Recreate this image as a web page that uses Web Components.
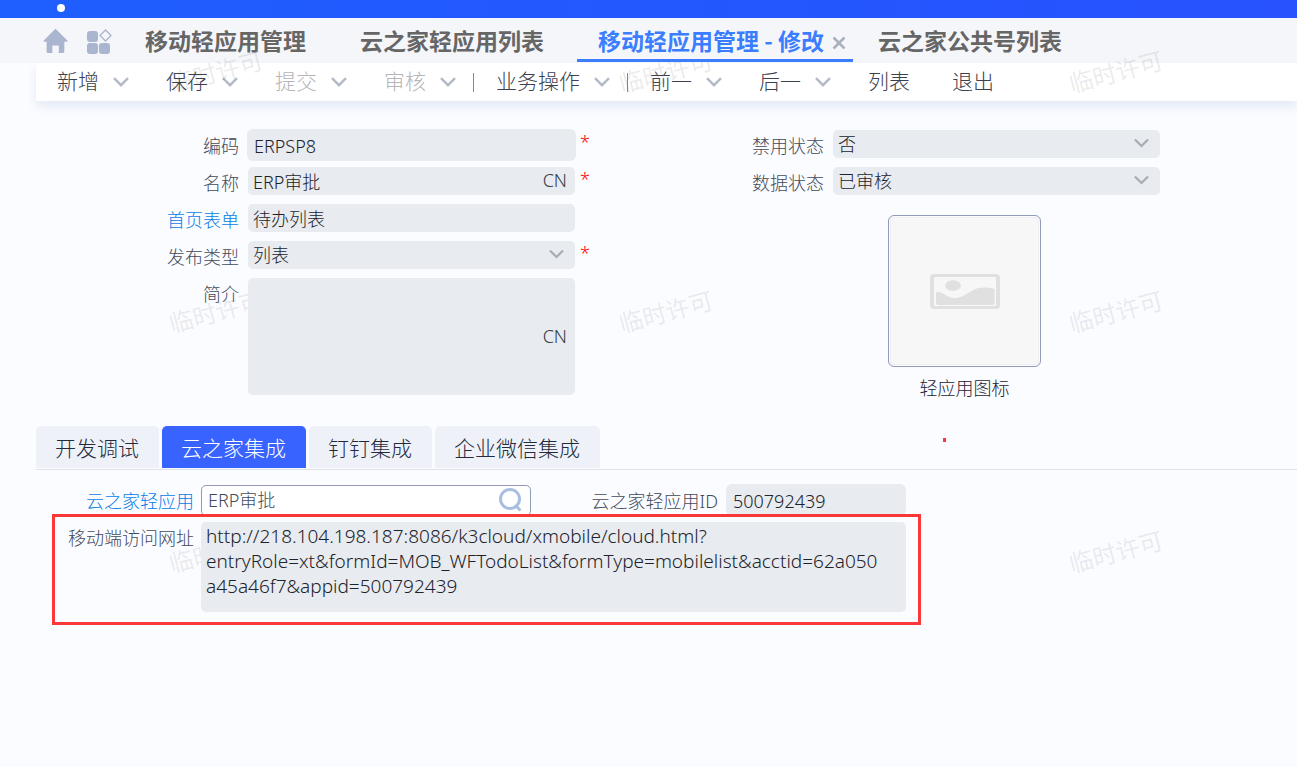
<!DOCTYPE html>
<html lang="zh-CN">
<head>
<meta charset="utf-8">
<title>移动轻应用管理 - 修改</title>
<style>
  body { margin: 0; background: #fbfcff; color: #2b3440; font: 300 18px/24px "Noto Sans", "Noto Sans CJK SC", sans-serif; }
</style>
</head>
<body>
<app-page></app-page>
<script>
const chevron = (w, color) => `<svg width="${w}" height="10" viewBox="0 0 16 10" fill="none" stroke="${color}" stroke-width="2.400" aria-hidden="true"><path d="M1 1.2 8 8.2 15 1.2"/></svg>`;

function define(name, render) {
  customElements.define(name, class extends HTMLElement {
    connectedCallback() {
      if (this.shadowRoot) return;
      this.attachShadow({ mode: 'open' }).innerHTML = render(this);
    }
  });
}

define('page-tab', el => `
<style>
  :host { display: block; height: 44px; }
  :host([active]) { position: relative; z-index: 1; }
  div { display: flex; align-items: center; height: 41px; padding: 0 7px 0 21px; border-bottom: 3px solid transparent; }
  a { color: #666; text-decoration: none; font: 700 23px/44px "Noto Sans CJK SC", sans-serif; white-space: nowrap; padding-top: 2px; }
  button { visibility: hidden; border: 0; background: none; padding: 0; margin: 8px 0 0 8px; width: 14px; height: 14px; }
  svg { display: block; }
  :host([active]) div { border-color: #3a7eff; background: #f5f6fa; }
  :host([active]) a { color: #3a7eff; }
  :host([active]) button { visibility: visible; }
</style>
<div><a href="#"><slot></slot></a><button aria-label="关闭"><svg width="14" height="14" viewBox="0 0 14 14" stroke="#a9b0bf" stroke-width="2.500"><path d="M1.5 1.5 12.5 12.5M12.5 1.5 1.5 12.5"/></svg></button></div>`);

define('app-header', () => `
<style>
  :host { display: block; background: #f5f6fa; }
  .brand { height: 18px; background: linear-gradient(90deg, #1f5eff, #2752fe); overflow: hidden; }
  .dot { width: 8px; height: 8px; margin: 4px 0 0 57px; border-radius: 50%; background: #fff; }
  nav { display: flex; height: 45px; }
  .icons { display: flex; align-items: center; gap: 18px; padding: 0 11px 0 43px; }
  .icons a { display: block; height: 26px; }
  .tabs { display: flex; gap: 4px; }
</style>
<div class="brand"><div class="dot"></div></div>
<nav>
  <div class="icons">
    <a href="#" aria-label="首页"><svg width="26" height="26" viewBox="0 0 26 26" fill="#aab5cf"><path d="M12.5.8 24.4 12.5q.7 1-.5 1.2H21.3V23.4q0 1.6-1.6 1.6H15.8V17.5H9.3V25H5.2q-1.6 0-1.6-1.6V13.7H1.2Q0 13.4.7 12.5Z"/></svg></a>
    <a href="#" aria-label="应用"><svg width="26" height="26" viewBox="0 0 26 26" fill="#aab5cf"><rect y="3" width="11" height="11" rx="3"/><rect y="15" width="11" height="11" rx="3"/><rect x="12" y="15" width="11" height="11" rx="3"/><path d="M18.500 2 24 7.500l-5.500 5.500L13 7.500Z" fill="none" stroke="#aab5cf" stroke-width="1.300"/></svg></a>
  </div>
  <div class="tabs">
    <page-tab>移动轻应用管理</page-tab>
    <page-tab>云之家轻应用列表</page-tab>
    <page-tab active>移动轻应用管理 - 修改</page-tab>
    <page-tab>云之家公共号列表</page-tab>
  </div>
</nav>`);

define('tool-item', el => `
<style>
  :host { display: block; }
  button { display: flex; align-items: center; gap: 14px; height: 38px; border: 0; background: none; padding: 0 21px 2px; color: #3b414d; font: inherit; font-size: 21px; line-height: 36px; white-space: nowrap; }
  svg { margin-top: 2px; }
  button.menu { padding-right: 16px; }
  button:disabled { color: #b5b5b8; }
</style>
<button class="${el.hasAttribute('menu') ? 'menu' : ''}" ${el.hasAttribute('disabled') ? 'disabled' : ''}><slot></slot>${el.hasAttribute('menu') ? chevron(16, '#b4bac8') : ''}</button>`);

define('tool-bar', () => `
<style>
  :host { display: flex; align-items: center; height: 38px; margin-left: 36px; background: #fff; box-shadow: 0 6px 10px #e4eaf5; }
  i { width: 1px; height: 19px; margin: 0 1px; background: #888; }
</style>
<tool-item menu>新增</tool-item><tool-item menu>保存</tool-item><tool-item menu disabled>提交</tool-item><tool-item menu disabled>审核</tool-item><i></i>
<tool-item menu>业务操作</tool-item><i></i>
<tool-item menu>前一</tool-item><tool-item menu>后一</tool-item><tool-item>列表</tool-item><tool-item>退出</tool-item>`);

/* One labelled field; kind: text | select | area | search */
define('form-field', el => {
  const a = n => el.getAttribute(n) || '';
  const kind = a('kind') || 'text';
  const control = kind === 'select' ? `<select id="c" disabled><option>${a('value')}</option></select>`
    : kind === 'area' ? `<textarea id="c" readonly>${a('value')}</textarea>`
    : `<input id="c" value="${a('value')}" ${kind === 'search' ? '' : 'readonly'}>`;
  return `
<style>
  :host { display: flex; align-items: flex-start; color: #434b5a; }
  label { flex: none; width: var(--label-width, 203px); margin-right: var(--label-gap, 9px); padding-top: 4px; text-align: right; white-space: nowrap; }
  label a { color: #0a7de6; text-decoration: none; }
  .box { position: relative; flex: 0 1 var(--field-width, 327px); min-width: 0; }
  input, select, textarea { display: block; box-sizing: border-box; width: 100%; height: 28px; margin: 0; padding: 0 5px; border: 0; border-radius: 5px; outline: 0; resize: none; appearance: none; overflow: hidden; background: #e8ebef; color: #1c232c; opacity: 1; font: inherit; line-height: 25px; }
  textarea { height: var(--area-height, 117px); padding: 2px 20px 2px 5px; overflow-wrap: anywhere; font-size: 19px; }
  :host([large]) input { height: 30px; padding: 2px 6px 0; box-shadow: 0 0 0 1px #e8ebef; }
  :host([kind=search]) input { height: 31px; padding: 0 6px 3px; background: #fff; border: 1px solid #8f9bb9; color: #434b5a; }
  .suffix { position: absolute; right: 8px; top: 0; bottom: 2px; display: flex; align-items: center; color: #343b44; }
  button { border: 0; padding: 0; background: none; display: flex; }
  .select { right: 11px; }
  .star { color: #f00; padding-left: 5px; line-height: 24px; }
</style>
<label for="c">${el.hasAttribute('link') ? `<a href="#">${a('label')}</a>` : a('label')}</label>
<div class="box">${control}
${a('suffix') ? `<span class="suffix">${a('suffix')}</span>` : ''}
${kind === 'select' ? `<span class="suffix select">${chevron(15, '#a9adb3')}</span>` : ''}
${kind === 'search' ? `<button class="suffix" aria-label="搜索"><svg width="26" height="25" viewBox="0 0 26 25" fill="none" stroke="#a9bfdf" stroke-width="3"><circle cx="13" cy="12" r="9.500"/><path d="M18 18 23.500 23.500"/></svg></button>` : ''}
</div>${el.hasAttribute('required') ? '<span class="star">*</span>' : ''}`;
});

define('picture-field', () => `
<style>
  :host { display: flex; flex-direction: column; align-items: center; gap: 9px; width: 153px; color: #1d2230; }
  button { box-sizing: border-box; width: 153px; height: 152px; border: 1px solid #8f9bb9; border-radius: 6px; padding: 0; background: #f7f7f7; box-shadow: inset 0 0 0 1px #fbfcff, inset 0 0 0 2px #eeeff1; display: grid; place-items: center; }
</style>
<button aria-labelledby="t"><svg width="70" height="35" viewBox="0 0 70 35"><rect width="70" height="35" rx="4" fill="#e0e0e0"/><rect x="4" y="3" width="62" height="29" rx="1" fill="#f7f7f7"/><ellipse cx="23" cy="11.500" rx="7.800" ry="5.300" fill="#e0e0e0"/><path d="M6 19q0-1.500 3-1 4 .8 7 3.500 9 5.500 19-.5C43 15.500 50 11 64.500 15V29q0 2-2 2H8q-2 0-2-2Z" fill="#e0e0e0"/></svg></button>
<span id="t">轻应用图标</span>`);

define('basic-form', () => `
<style>
  :host { display: grid; grid-template-columns: 585fr 676fr; padding: 29px 0 0 36px; }
  .col { display: flex; flex-direction: column; gap: 9px; min-width: 0; }
  .col > [large] { height: 28px; }
  picture-field { margin: 11px 0 0 267px; }
</style>
<div class="col">
  <form-field label="编码" value="ERPSP8" large required></form-field>
  <form-field label="名称" value="ERP审批" suffix="CN" required></form-field>
  <form-field label="首页表单" value="待办列表" link></form-field>
  <form-field label="发布类型" value="列表" kind="select" required></form-field>
  <form-field label="简介" kind="area" suffix="CN"></form-field>
</div>
<div class="col">
  <form-field label="禁用状态" value="否" kind="select"></form-field>
  <form-field label="数据状态" value="已审核" kind="select"></form-field>
  <picture-field></picture-field>
</div>`);

define('detail-tabs', () => `
<style>
  :host { display: block; margin: 26px 0 0 36px; border-bottom: 1px solid #dfe2e9; }
  div { display: flex; gap: 3px; padding-bottom: 1px; }
  button { height: 42px; border: 0; border-radius: 5px 5px 0 0; padding: 2px 20px 0 19px; background: #eef1f8; color: #222a3c; font: inherit; font-size: 21px; line-height: 40px; white-space: nowrap; }
  button[aria-selected=true] { background: #3863ff; color: #fff; }
</style>
<div role="tablist"><button role="tab">开发调试</button><button role="tab" aria-selected="true">云之家集成</button><button role="tab">钉钉集成</button><button role="tab">企业微信集成</button></div>`);

define('cloud-panel', () => `
<style>
  :host { display: block; position: relative; padding: 15px 0 0 52px; --label-width: 142px; --label-gap: 7px; }
  .row { display: flex; }
  .search { --field-width: 330px; width: 479px; padding-bottom: 6px; }
  .id { --field-width: 178px; --label-width: 187px; --label-gap: 9px; }
  .url { --field-width: 705px; --area-height: 90px; }
  .mark { position: absolute; box-sizing: border-box; border: 3px solid #fc3737; left: 52px; top: 44px; width: 869px; height: 111px; pointer-events: none; }
  .speck { position: absolute; left: 943px; top: -32px; width: 3px; height: 4px; background: #fc3737; }
</style>
<div class="row">
  <form-field class="search" label="云之家轻应用" value="ERP审批" kind="search" link></form-field>
  <form-field class="id" label="云之家轻应用ID" value="500792439" large></form-field>
</div>
<form-field class="url" label="移动端访问网址" kind="area" value="http://218.104.198.187:8086/k3cloud/xmobile/cloud.html?entryRole=xt&amp;amp;formId=MOB_WFTodoList&amp;amp;formType=mobilelist&amp;amp;acctid=62a050a45a46f7&amp;amp;appid=500792439"></form-field>
<div class="mark"></div><div class="speck"></div>`);

define('water-mark', () => `
<style>
  :host { position: absolute; inset: -48px 0 0 -9px; display: grid; grid-template-columns: repeat(3, 450px); grid-auto-rows: 240px; place-items: center; overflow: hidden; pointer-events: none; }
  span { transform: rotate(-15deg); font-size: 24px; font-weight: 400; color: rgba(60, 60, 70, .11); }
</style>${'<span>临时许可</span>'.repeat(9)}`);

define('app-page', () => `
<style>
  :host { display: block; position: relative; min-height: 100vh; overflow: hidden; }
  main { position: relative; }
</style>
<app-header></app-header>
<tool-bar></tool-bar>
<water-mark></water-mark>
<main>
  <basic-form></basic-form>
  <detail-tabs></detail-tabs>
  <cloud-panel></cloud-panel>
</main>`);
</script>
</body>
</html>
